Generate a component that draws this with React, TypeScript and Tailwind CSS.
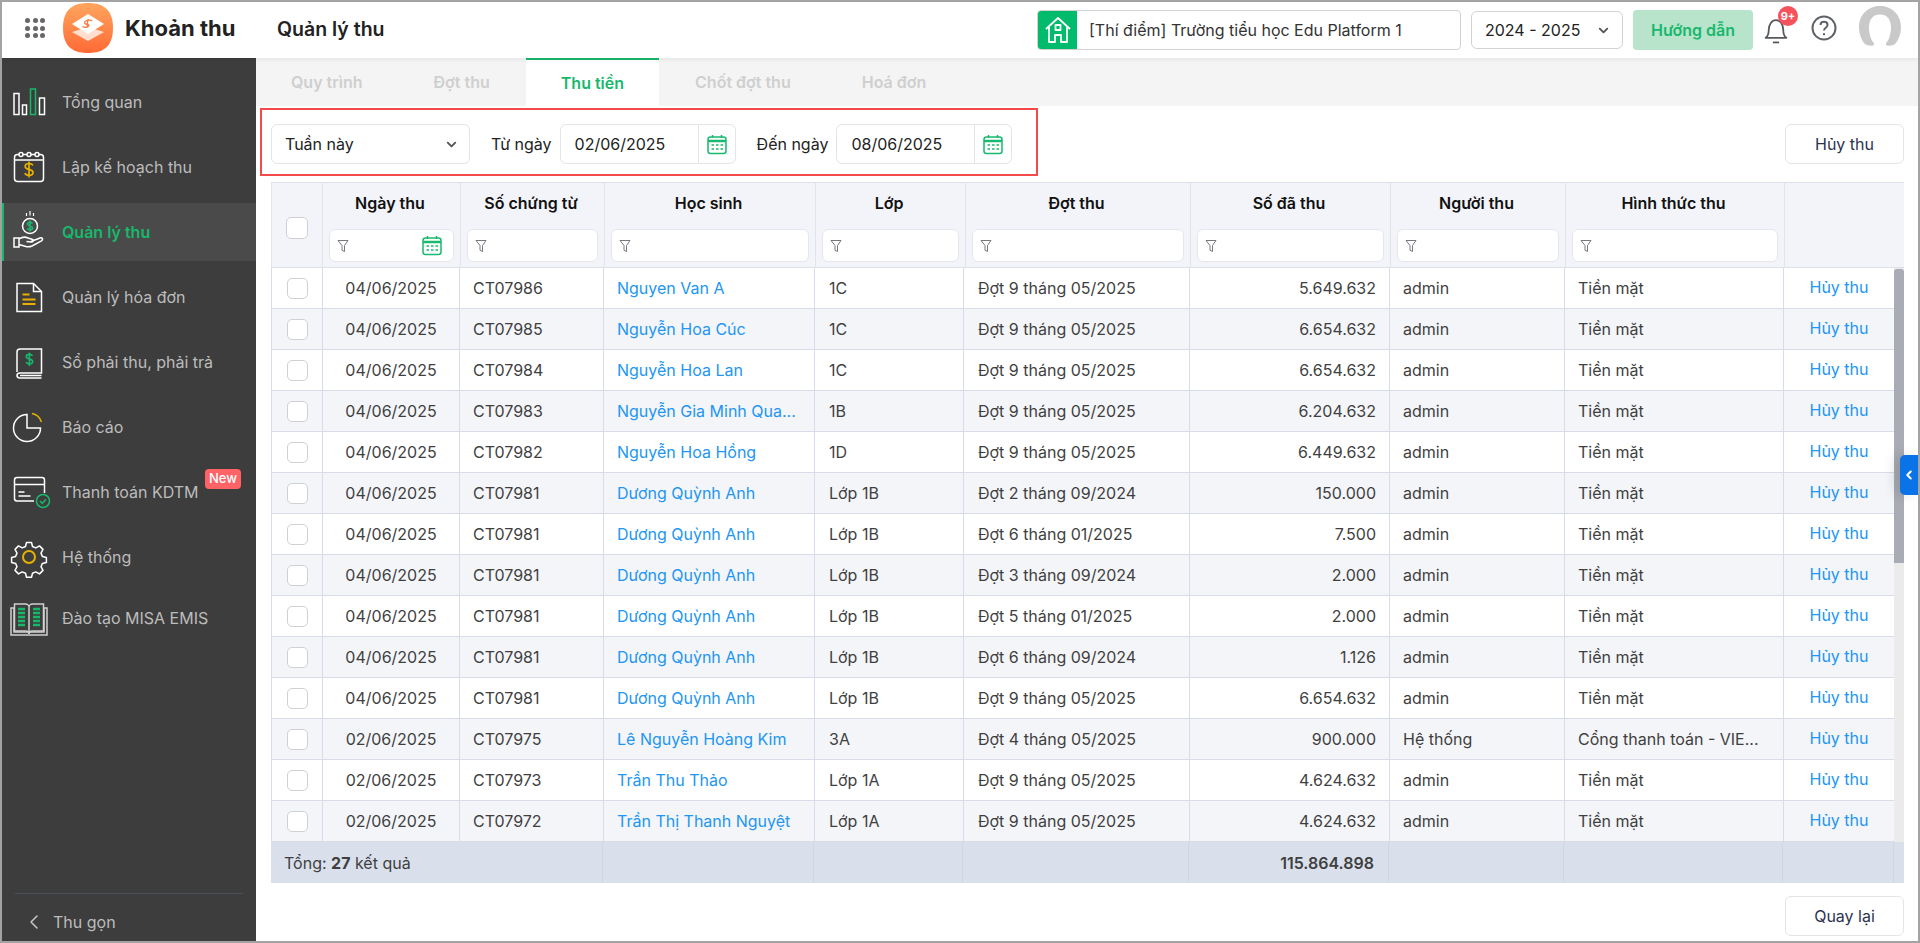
import { ChevronDown, ChevronLeft } from "lucide-react";
import type { ReactNode } from "react";

const rows = [
  ["04/06/2025", "CT07986", "Nguyen Van A", "1C", "Đợt 9 tháng 05/2025", "5.649.632", "admin", "Tiền mặt"],
  ["04/06/2025", "CT07985", "Nguyễn Hoa Cúc", "1C", "Đợt 9 tháng 05/2025", "6.654.632", "admin", "Tiền mặt"],
  ["04/06/2025", "CT07984", "Nguyễn Hoa Lan", "1C", "Đợt 9 tháng 05/2025", "6.654.632", "admin", "Tiền mặt"],
  ["04/06/2025", "CT07983", "Nguyễn Gia Minh Qua...", "1B", "Đợt 9 tháng 05/2025", "6.204.632", "admin", "Tiền mặt"],
  ["04/06/2025", "CT07982", "Nguyễn Hoa Hồng", "1D", "Đợt 9 tháng 05/2025", "6.449.632", "admin", "Tiền mặt"],
  ["04/06/2025", "CT07981", "Dương Quỳnh Anh", "Lớp 1B", "Đợt 2 tháng 09/2024", "150.000", "admin", "Tiền mặt"],
  ["04/06/2025", "CT07981", "Dương Quỳnh Anh", "Lớp 1B", "Đợt 6 tháng 01/2025", "7.500", "admin", "Tiền mặt"],
  ["04/06/2025", "CT07981", "Dương Quỳnh Anh", "Lớp 1B", "Đợt 3 tháng 09/2024", "2.000", "admin", "Tiền mặt"],
  ["04/06/2025", "CT07981", "Dương Quỳnh Anh", "Lớp 1B", "Đợt 5 tháng 01/2025", "2.000", "admin", "Tiền mặt"],
  ["04/06/2025", "CT07981", "Dương Quỳnh Anh", "Lớp 1B", "Đợt 6 tháng 09/2024", "1.126", "admin", "Tiền mặt"],
  ["04/06/2025", "CT07981", "Dương Quỳnh Anh", "Lớp 1B", "Đợt 9 tháng 05/2025", "6.654.632", "admin", "Tiền mặt"],
  ["02/06/2025", "CT07975", "Lê Nguyễn Hoàng Kim", "3A", "Đợt 4 tháng 05/2025", "900.000", "Hệ thống", "Cổng thanh toán - VIE..."],
  ["02/06/2025", "CT07973", "Trần Thu Thảo", "Lớp 1A", "Đợt 9 tháng 05/2025", "4.624.632", "admin", "Tiền mặt"],
  ["02/06/2025", "CT07972", "Trần Thị Thanh Nguyệt", "Lớp 1A", "Đợt 9 tháng 05/2025", "4.624.632", "admin", "Tiền mặt"],
];

const W = "#ffffff";
const G = "#17b86c";
const Y = "#e8b100";

function Icon({ children }: { children: ReactNode }) {
  return (
    <svg width="44" height="44" viewBox="0 0 44 44" fill="none" stroke={W} strokeWidth="1.5" className="shrink-0">
      {children}
    </svg>
  );
}

const navItems: { label: string; icon: ReactNode; active?: boolean; badge?: boolean; nudge?: boolean }[] = [
  {
    label: "Tổng quan",
    icon: (
      <Icon>
        <rect x="7" y="13.5" width="5" height="21" />
        <rect x="15.5" y="25" width="4" height="9.5" />
        <rect x="23.5" y="9" width="5" height="25.5" stroke={G} />
        <rect x="32.5" y="18" width="5" height="16.5" />
      </Icon>
    ),
  },
  {
    label: "Lập kế hoạch thu",
    icon: (
      <Icon>
        <rect x="7.5" y="9.5" width="29" height="27" rx="3" />
        <path d="M7.5 15h29" />
        <circle cx="14" cy="9.5" r="2" fill="#3d3d3d" />
        <circle cx="22" cy="9.5" r="2" fill="#3d3d3d" />
        <circle cx="30" cy="9.5" r="2" fill="#3d3d3d" />
        <path d="M26 20.5c-.6-1.3-2-2-4-2-2.3 0-3.8 1.1-3.8 2.9 0 4 7.8 2 7.8 6 0 1.8-1.6 2.9-4 2.9-2 0-3.5-.8-4.1-2.2M22 16.5v16" stroke={Y} strokeWidth="1.7" />
      </Icon>
    ),
  },
  {
    label: "Quản lý thu",
    active: true,
    icon: (
      <Icon>
        <circle cx="23" cy="16" r="7.5" />
        <path d="M25.5 13.5c-.5-.9-1.3-1.3-2.5-1.3-1.5 0-2.5.7-2.5 1.8 0 2.5 5 1.4 5 3.9 0 1.2-1 1.9-2.5 1.9-1.3 0-2.2-.5-2.6-1.4M23 10.5v11" stroke={G} strokeWidth="1.6" />
        <path d="M23 1v4.5M19.5 3v3M26.5 3v3" strokeWidth="1.2" />
        <path d="M7 28h5v9H7zM12 29c3-2 6-2.5 9-1l4 1.2c2 .8 1.5 3-.5 2.8l-5-.6M24 31.5l9-3.5c2.5-.7 3.5 1.5 1.500 2.8L25 36c-2.5 1.2-5 1-7 .2l-6-1.700" />
      </Icon>
    ),
  },
  {
    label: "Quản lý hóa đơn",
    icon: (
      <Icon>
        <path d="M10 8.5h16.5l8 8v20H10z" />
        <path d="M26.5 8.5v8h8" />
        <path d="M15.5 19.5h7M15.5 24.5h13M15.5 29h13" stroke={Y} strokeWidth="1.8" />
      </Icon>
    ),
  },
  {
    label: "Sổ phải thu, phải trả",
    icon: (
      <Icon>
        <path d="M10 32V12c0-2 1-3 3-3h21.5v24H13c-2 0-3 1-3 2.5S11 38 13 38h21.5M13 35.5h21.5" />
        <path d="M25.5 16c-.5-1-1.6-1.6-3.200-1.600-1.800 0-3 .9-3 2.300 0 3 6.400 1.700 6.400 4.800 0 1.400-1.300 2.300-3.200 2.300-1.600 0-2.800-.6-3.300-1.700M22.400 12.500v13.500" stroke={G} strokeWidth="1.6" />
      </Icon>
    ),
  },
  {
    label: "Báo cáo",
    icon: (
      <Icon>
        <path d="M20 9.5a13.5 13.5 0 1 0 13.5 13.5H20z" />
        <path d="M25 8.5c4.5.8 8 4.2 9.5 8.5" stroke={Y} />
      </Icon>
    ),
  },
  {
    label: "Thanh toán KDTM",
    badge: true,
    icon: (
      <Icon>
        <path d="M27 31H10c-1.5 0-2.5-1-2.5-2.5V10c0-1.5 1-2.5 2.5-2.5h25c1.5 0 2.5 1 2.5 2.5v13" />
        <path d="M7.5 14.5h30M11.5 22h6M11.5 26h12" />
        <circle cx="36" cy="31" r="6.5" stroke={G} />
        <path d="M33 31l2.300 2.300 3.700-4" stroke={G} />
      </Icon>
    ),
  },
  {
    label: "Hệ thống",
    icon: (
      <Icon>
        <path d="M19.5 7.5h5l1 4 3.300 1.400 3.700-2 3.500 3.500-2 3.700 1.400 3.300 4 1v5l-4 1-1.400 3.300 2 3.700-3.500 3.500-3.700-2-3.300 1.400-1 4h-5l-1-4-3.300-1.400-3.700 2-3.500-3.500 2-3.700-1.400-3.300-4-1v-5l4-1 1.400-3.300-2-3.700 3.500-3.500 3.700 2 3.300-1.400z" strokeLinejoin="round" />
        <circle cx="22" cy="22" r="6" stroke={Y} strokeWidth="2" />
      </Icon>
    ),
  },
  {
    label: "Đào tạo MISA EMIS",
    nudge: true,
    icon: (
      <Icon>
        <path d="M4 12h3v24h13c1 0 2 1 2 2 0-1 1-2 2-2h13V12h3v27H4z" stroke="#d0d0d0" />
        <path d="M7.5 8h11c2 0 3.5 1.5 3.5 3 0-1.5 1.5-3 3.5-3h11v27H25c-1.5 0-3 1-3 2 0-1-1.5-2-3-2H7.5z" stroke="#d0d0d0" />
        <path d="M22 11v25" stroke="#d0d0d0" />
        <path d="M11 13h7M11 17h7M11 21h7M11 25h7M11 29h7M26 13h7M26 17h7M26 21h7M26 25h7M26 29h7" stroke={G} strokeWidth="2.5" />
      </Icon>
    ),
  },
];

function Funnel() {
  return (
    <svg width="12" height="14" viewBox="0 0 12 14" fill="none" stroke="#77797f" strokeWidth="1" className="shrink-0">
      <path d="M1 1.5h10L7.5 6.5v6L5 11.3V6.5z" strokeLinejoin="round" />
    </svg>
  );
}

function CalendarIcon() {
  return (
    <svg width="20" height="21" viewBox="0 0 20 21" fill="none" stroke="#19b96f" strokeWidth="1.5" className="shrink-0">
      <rect x="1" y="3" width="18" height="16.5" rx="2.5" />
      <path d="M5.5 1v3M14.5 1v3" />
      <path d="M1 7h18" strokeWidth="2.5" />
      <path d="M4.5 11H7M9 11h2.5M13.5 11H16M4.5 15H7M9 15h2.5M13.5 15H16" strokeWidth="1.7" />
    </svg>
  );
}

function DateField({ value, className }: { value: string; className: string }) {
  return (
    <div className={`flex h-10 items-stretch rounded-md border border-[#e3e4e8] bg-white ${className}`}>
      <div className="flex flex-1 items-center pl-[14px] text-[16px] text-[#222]">{value}</div>
      <div className="flex w-[37px] items-center justify-center border-l border-[#e3e4e8]">
        <CalendarIcon />
      </div>
    </div>
  );
}

function Sidebar() {
  return (
    <aside className="flex w-[254px] shrink-0 flex-col bg-[#3d3d3d]">
      <nav className="flex flex-1 flex-col gap-[7px] pt-[15px]">
        {navItems.map((item) => (
          <div
            key={item.label}
            className={`relative flex h-[58px] items-center ${item.active ? "border-l-2 border-[#17b86c] bg-[#4a4a4a] pl-[3px]" : "pl-[5px]"} ${item.nudge ? "-mt-1" : ""}`}
          >
            <span className="flex w-[44px] justify-center">{item.icon}</span>
            <span className={`ml-[11px] text-[16px] ${item.active ? "font-semibold text-[#17b86c]" : "text-[#bcbcbc]"}`}>{item.label}</span>
            {item.badge && (
              <span className="absolute left-[203px] top-[6px] flex h-5 w-9 items-center justify-center rounded bg-[#ff6366] text-[13px] font-medium text-white">
                New
              </span>
            )}
          </div>
        ))}
      </nav>
      <div className="mx-[13px] border-t border-[#4b5158]" />
      <div className="flex h-[47px] items-center pl-[20px] pt-2 text-[16px] text-[#bcbcbc]">
        <ChevronLeft size={24} strokeWidth={1.5} className="text-[#c8c8c8]" />
        <span className="ml-[7px]">Thu gọn</span>
      </div>
    </aside>
  );
}

function Header() {
  return (
    <header className="z-10 flex h-14 shrink-0 items-center bg-white shadow-[0_2px_4px_rgba(0,0,0,0.06)]">
      <div className="flex w-[254px] shrink-0 items-center pb-1 pl-[23px]">
        <div className="grid w-5 grid-cols-3 gap-[2.5px]">
          {Array.from({ length: 9 }).map((_, i) => (
            <span key={i} className="size-[5px] rounded-full bg-[#666]" />
          ))}
        </div>
        <svg width="50" height="50" viewBox="0 0 50 50" className="ml-[18px] shrink-0">
          <defs>
            <linearGradient id="logoBg" x1="0" y1="0" x2="0" y2="1">
              <stop offset="0" stopColor="#ffa55f" />
              <stop offset="1" stopColor="#ff6a35" />
            </linearGradient>
          </defs>
          <path d="M25 0C42 0 50 8 50 25S42 50 25 50 0 42 0 25 8 0 25 0z" fill="url(#logoBg)" />
          <path d="M25 24L41 29 25 38 9 29z" fill="#fff" opacity="0.75" />
          <path d="M25 11L41 21 25 31 9 21z" fill="#fff" />
          <path d="M29 18c-1-1-4-1-6 0-2 1-2 2.5 0 3s4 1 2 2.5c-1.5 1-4 1-5.5 0M25 16l-1 9" stroke="#ff7a3f" strokeWidth="1.3" fill="none" />
        </svg>
        <span className="ml-3 whitespace-nowrap text-[22px] font-bold text-[#222]">Khoản thu</span>
      </div>
      <div className="ml-[21px] text-[19.5px] font-semibold text-[#222]">Quản lý thu</div>
      <div className="ml-auto flex items-center pr-[17px]">
        <div className="flex h-10 w-[424px] items-stretch overflow-hidden rounded border border-[#d2d2d2]">
          <div className="flex w-[39px] items-center justify-center bg-[#00bb6c]">
            <svg width="28" height="28" viewBox="0 0 28 28" fill="none" stroke="#fff" strokeWidth="1.8" strokeLinejoin="round">
              <path d="M2 13L14 2l12 11M5 11v15h6v-7h6v7h6V11" />
              <rect x="11.5" y="9" width="5" height="5" />
            </svg>
          </div>
          <div className="flex flex-1 items-center pl-[12px] text-[16px] text-[#333]">[Thí điểm] Trường tiểu học Edu Platform 1</div>
        </div>
        <div className="ml-[10px] flex h-[38px] w-[152px] items-center justify-between rounded-md border border-[#d2d2d2] pl-[13px] pr-[11px] text-[16px] text-[#222]">
          2024 - 2025
          <ChevronDown size={15} strokeWidth={3} className="text-[#555]" />
        </div>
        <div className="ml-[10px] flex h-10 w-[120px] items-center justify-center rounded bg-[#b7e4cb] text-[16px] font-semibold text-[#17b86c]">
          Hướng dẫn
        </div>
        <div className="relative ml-[10px] h-[26px] w-[26px]">
          <svg width="26" height="27" viewBox="0 0 24 26" fill="none" stroke="#55585d" strokeWidth="1.7">
            <path d="M2 20c2.5-1.5 3-3.500 3-7.500C5 7 8 3 12 3s7 4 7 9.500c0 4 .5 6 3 7.500z" strokeLinejoin="round" />
            <path d="M9 24.5h6" />
          </svg>
          <span className="absolute left-[15px] top-[-11px] flex size-5 items-center justify-center rounded-full bg-[#f5525c] text-[11px] font-bold text-white">
            9+
          </span>
        </div>
        <svg width="26" height="26" viewBox="0 0 26 26" fill="none" stroke="#5f6368" strokeWidth="2" className="mb-1 ml-[22px]">
          <circle cx="13" cy="13" r="11.5" />
          <path d="M9.5 10c0-2 1.5-3.300 3.500-3.300s3.500 1.300 3.500 3.200c0 2.800-3.500 2.800-3.500 5.600" />
          <path d="M13 18.200v2" />
        </svg>
        <svg width="42" height="40" viewBox="0 0 42 40" className="mb-2 ml-[22px]">
          <path d="M21 0C32 0 42 8 42 21c0 7-2.5 13-6 17-2 1.5-5 2-8 1.500-1.500-.5-1.500-2 0-3.500 2.500-3 4-9 4-15C32 13 27.500 8.500 21 8.500S10 13 10 21c0 6 1.500 12 4 15 1.500 1.500 1.500 3 0 3.500-3 .5-6 0-8-1.500C2.500 34 0 28 0 21 0 8 10 0 21 0z" fill="#c9c9c9" />
        </svg>
      </div>
    </header>
  );
}

function Tabs() {
  const tabs = ["Quy trình", "Đợt thu", "Thu tiền", "Chốt đợt thu", "Hoá đơn"];
  return (
    <div className="flex h-12 shrink-0 gap-[1px] bg-[#f4f4f4]">
      {tabs.map((t) => (
        <div
          key={t}
          className={`flex items-center px-[35px] text-[16px] font-semibold ${
            t === "Thu tiền" ? "border-t-2 border-[#17b86c] bg-white text-[#17b86c]" : "text-[#cfcfcf]"
          }`}
        >
          {t}
        </div>
      ))}
    </div>
  );
}

function HeaderCell({ label, calendar }: { label: string; calendar?: boolean }) {
  return (
    <div className="flex h-[84px] flex-col items-stretch border-r border-[#e2e4ea] pl-[6px] pr-[6px]">
      <div className="flex h-[46px] items-center justify-center pb-[6px] pr-[3px] text-[16px] font-semibold text-[#111]">{label}</div>
      <div className="flex h-[33px] items-center justify-between rounded-md border border-[#e6e7ec] bg-white pl-[7px] pr-[11px]">
        <Funnel />
        {calendar && <CalendarIcon />}
      </div>
    </div>
  );
}

function DataTable() {
  return (
    <div className="ml-[15px] mr-[14px] mt-[6px]">
      <div className="grid grid-cols-[52px_138px_144px_211px_150px_225px_200px_175px_219px_119px] border-b border-t border-[#dfe1e8] bg-[#f3f4f9] text-center">
        <div className="flex items-center justify-center border-l border-r border-[#e2e4ea] pt-[6px]">
          <span className="size-[22px] rounded-[5px] border border-[#cfd0d4] bg-white" />
        </div>
        <HeaderCell label="Ngày thu" calendar />
        <HeaderCell label="Số chứng từ" />
        <HeaderCell label="Học sinh" />
        <HeaderCell label="Lớp" />
        <HeaderCell label="Đợt thu" />
        <HeaderCell label="Số đã thu" />
        <HeaderCell label="Người thu" />
        <HeaderCell label="Hình thức thu" />
        <div />
      </div>
      <div className="flex">
        <div className="flex-1">
          {rows.map((r, i) => (
            <div
              key={i}
              className={`grid h-[41px] grid-cols-[52px_137px_144px_211px_149px_226px_200px_175px_219px_110px] border-b border-[#d9dbe8] text-[16px] text-[#3f3f3f] ${
                i % 2 === 0 ? "bg-white" : "bg-[#f4f5f9]"
              }`}
            >
              <div className="flex items-center justify-center border-l border-r border-[#d9dbe8]">
                <span className="size-[21px] rounded-[5px] border border-[#cfd0d4] bg-white" />
              </div>
              <div className="flex items-center justify-center border-r border-[#d9dbe8]">{r[0]}</div>
              <div className="flex items-center border-r border-[#d9dbe8] pl-[13px]">{r[1]}</div>
              <div className="flex items-center whitespace-nowrap border-r border-[#d9dbe8] pl-[13px] text-[#2196f3]">{r[2]}</div>
              <div className="flex items-center border-r border-[#d9dbe8] pl-[14px]">{r[3]}</div>
              <div className="flex items-center border-r border-[#d9dbe8] pl-[14px]">{r[4]}</div>
              <div className="flex items-center justify-end border-r border-[#d9dbe8] pr-[13px]">{r[5]}</div>
              <div className="flex items-center border-r border-[#d9dbe8] pl-[13px]">{r[6]}</div>
              <div className="flex items-center whitespace-nowrap border-r border-[#d9dbe8] pl-[13px]">{r[7]}</div>
              <div className="flex items-center justify-center pb-[2px] text-[#2196f3]">Hủy thu</div>
            </div>
          ))}
        </div>
        <div className="w-[10px] shrink-0 bg-[#ebebeb] pt-[1px]">
          <div className="h-[294px] rounded-t-[3px] bg-[#a9acb4]" />
        </div>
      </div>
      <div className="grid h-[41px] grid-cols-[332px_211px_149px_226px_200px_175px_219px_111px_10px] bg-[#d9e0ec] text-[16px] text-[#3f3f3f]">
        <div className="flex items-center border-r border-[#cfd7e4] pl-[13px]">
          Tổng:&nbsp;<b className="font-bold">27</b>&nbsp;kết quả
        </div>
        <div className="border-r border-[#cfd7e4]" />
        <div className="border-r border-[#cfd7e4]" />
        <div className="border-r border-[#cfd7e4]" />
        <div className="flex items-center justify-end border-r border-[#cfd7e4] pr-[14px] font-semibold">115.864.898</div>
        <div className="border-r border-[#cfd7e4]" />
        <div className="border-r border-[#cfd7e4]" />
        <div className="border-r border-[#cfd7e4]" />
        <div />
      </div>
    </div>
  );
}

export default function App() {
  return (
    <div className="flex h-[943px] w-[1920px] flex-col overflow-hidden border-2 border-[#a3a3a3] bg-white [font-family:Inter,sans-serif]">
      <Header />
      <div className="flex min-h-0 flex-1">
        <Sidebar />
        <main className="relative flex min-w-0 flex-1 flex-col">
          <Tabs />
          <div className="mt-[2px] flex items-center pr-[14px]">
            <div className="ml-[4px] flex h-[68px] w-[778px] items-center border-2 border-[#f44a4a] pl-[9px] pt-1 text-[16px] text-[#222]">
              <div className="flex h-10 w-[199px] items-center justify-between rounded-md border border-[#e3e4e8] pl-[13px] pr-[10px]">
                Tuần này
                <ChevronDown size={15} strokeWidth={3} className="text-[#555]" />
              </div>
              <span className="ml-[21px]">Từ ngày</span>
              <DateField value="02/06/2025" className="ml-[8px] w-[176px]" />
              <span className="ml-[21px]">Đến ngày</span>
              <DateField value="08/06/2025" className="ml-[8px] w-[176px]" />
            </div>
            <div className="ml-auto mt-1 flex h-10 w-[119px] items-center justify-center rounded-md border border-[#e3e4e8] text-[16px] text-[#2c3350]">
              Hủy thu
            </div>
          </div>
          <DataTable />
          <div className="mr-[14px] mt-[13px] flex justify-end">
            <div className="flex h-10 w-[119px] items-center justify-center rounded-md border border-[#e3e4e8] text-[16px] text-[#2c3350]">
              Quay lại
            </div>
          </div>
          <div className="absolute right-0 top-[397px] flex h-10 w-[18px] items-center justify-center rounded-l-[5px] bg-[#0a73e8] shadow-[-6px_0_12px_rgba(0,0,0,0.12)]">
            <ChevronLeft size={14} strokeWidth={3.5} className="text-white" />
          </div>
        </main>
      </div>
    </div>
  );
}
